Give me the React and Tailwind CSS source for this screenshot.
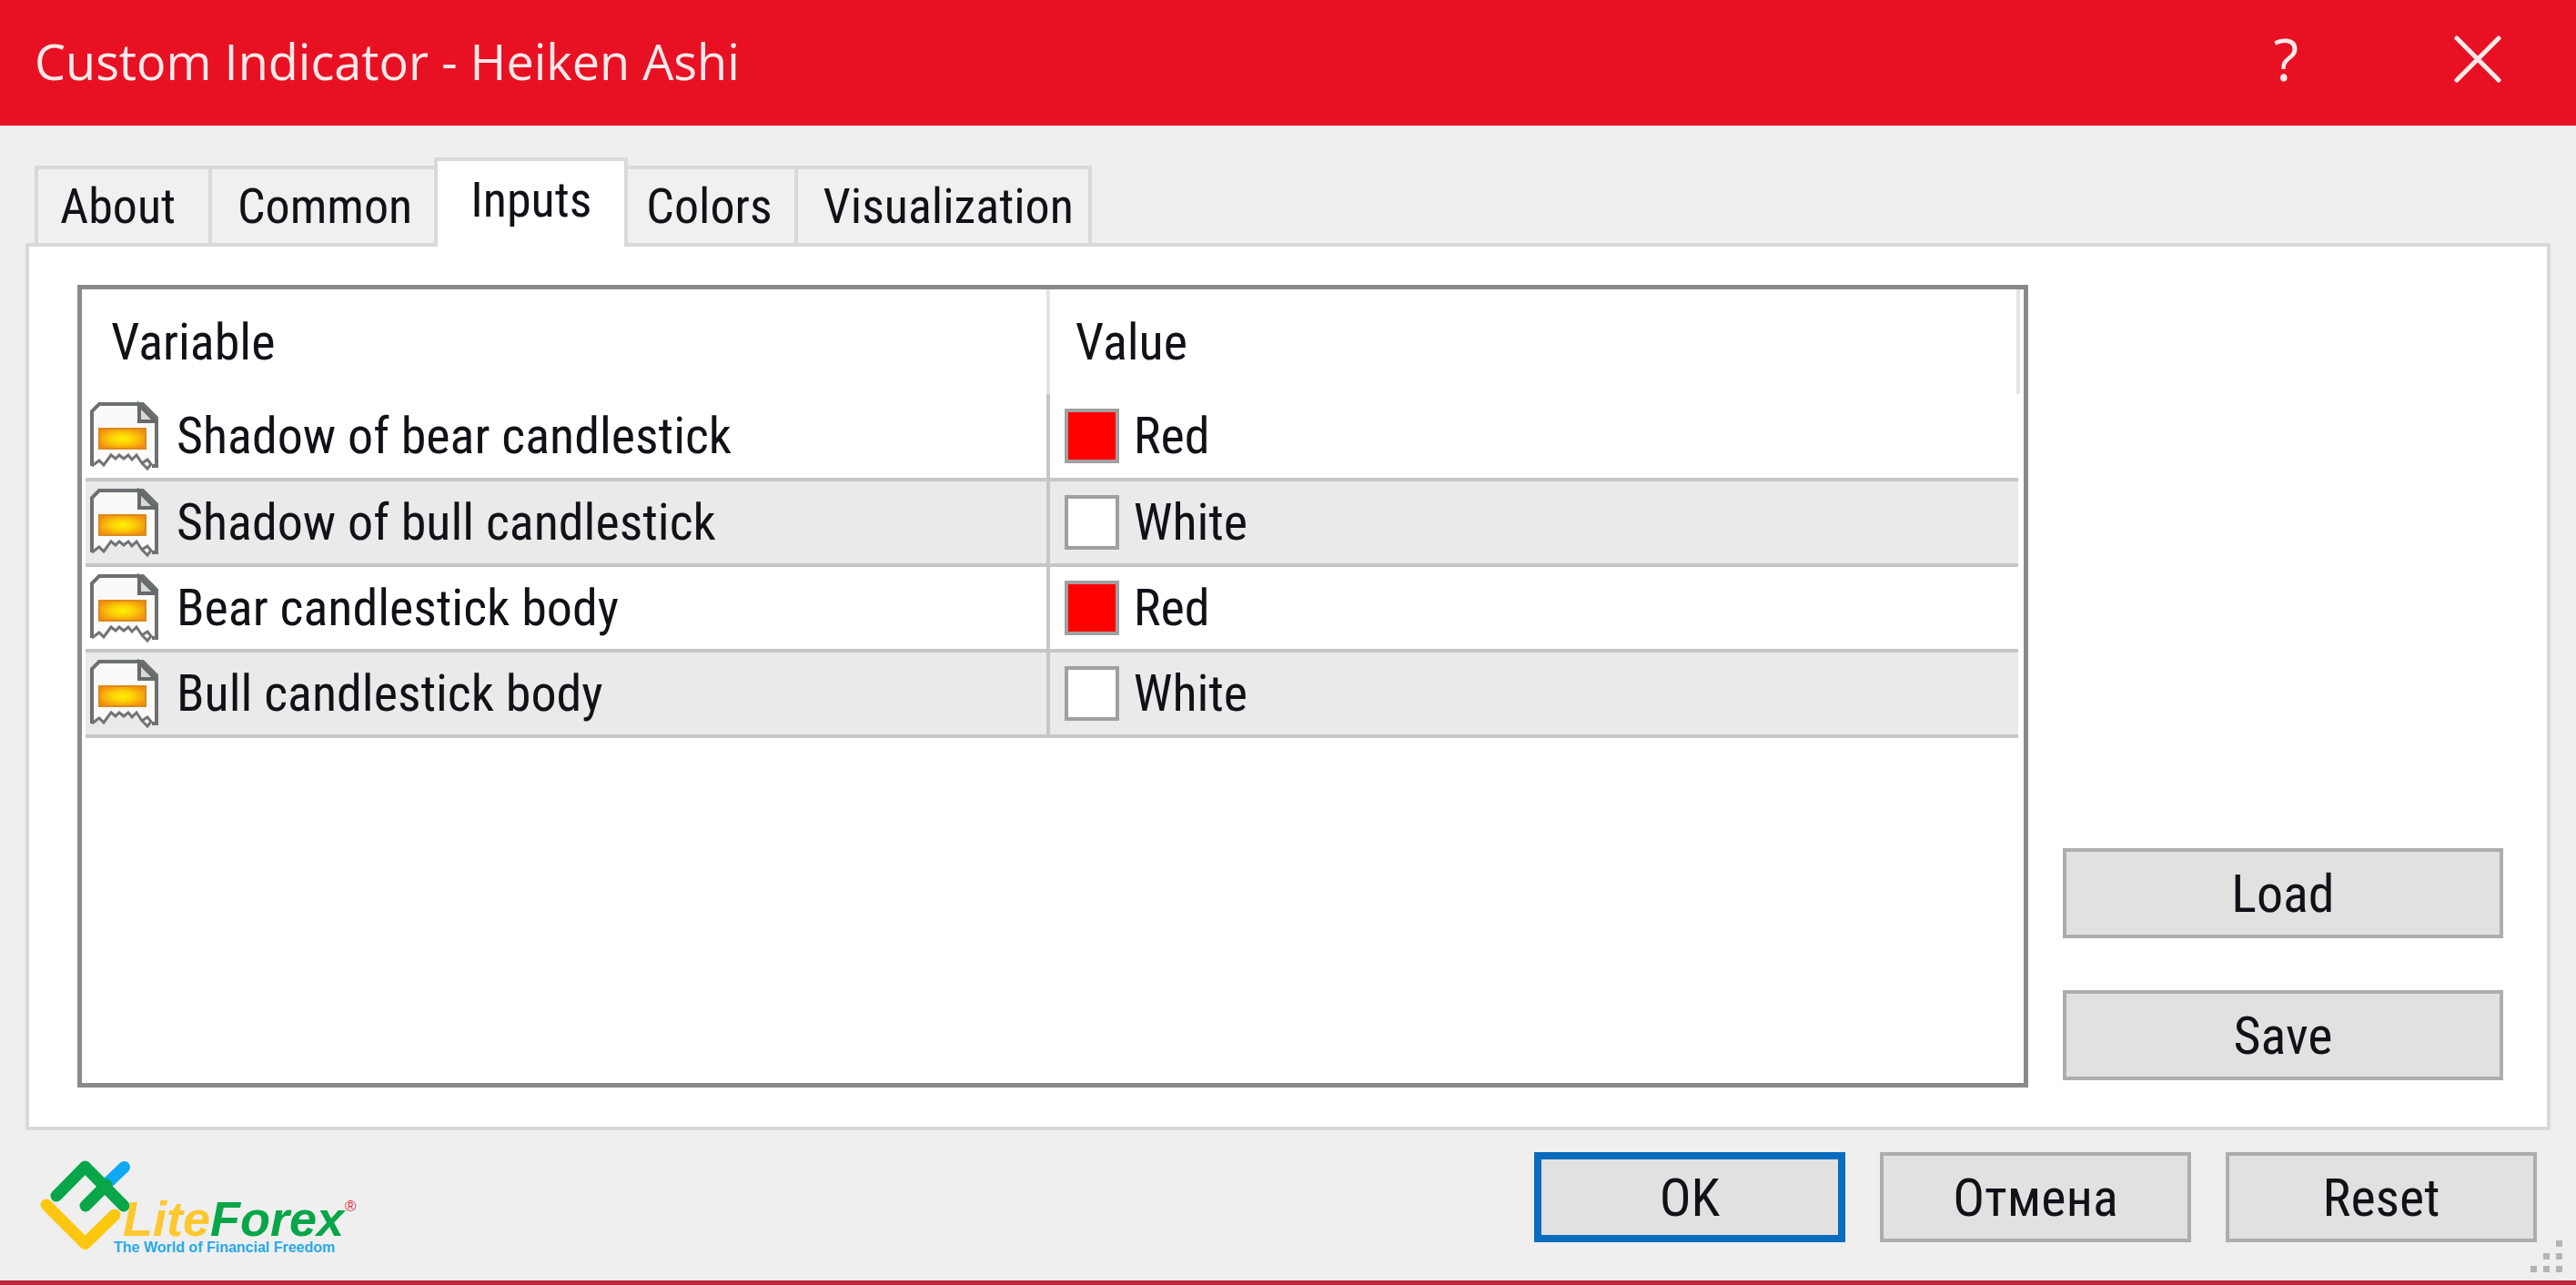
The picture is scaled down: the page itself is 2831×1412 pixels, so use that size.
import { useState } from 'react';

const TABS = ['About', 'Common', 'Inputs', 'Colors', 'Visualization'];

const INPUTS = [
  { name: 'Shadow of bear candlestick', value: 'Red' },
  { name: 'Shadow of bull candlestick', value: 'White' },
  { name: 'Bear candlestick body', value: 'Red' },
  { name: 'Bull candlestick body', value: 'White' },
];

const TAB_PADDING = {
  About: 'pl-6 pr-9',
  Common: 'pl-7 pr-6',
  Inputs: 'px-9',
  Colors: 'pl-5 pr-6',
  Visualization: 'pl-7 pr-4',
};

// Torn page with a gradient bar
function ParamIcon() {
  return (
    <svg viewBox="0 0 76 76" className="size-[76px] shrink-0" fill="none" aria-hidden="true">
      <defs>
        <radialGradient id="bar" cx="0.5" cy="0.5" r="0.6">
          <stop offset="0" stopColor="#fff200" />
          <stop offset="0.4" stopColor="#fdd008" />
          <stop offset="1" stopColor="#f08a10" />
        </radialGradient>
      </defs>
      <path
        d="M2 71V10L10 3H59L74 18V71H70L63 75L55 65L48 59L43 64L38 59L33 64L29 59L24 63L16 71L10 65L6 71Z"
        fill="#fbfaf8"
      />
      <path d="M3 71V11L11 3H59L74 18V71H69" stroke="#6c7072" strokeWidth="4" />
      <path d="M55 4V22H73Z" fill="#d8d8d4" stroke="#666a6c" strokeWidth="4" />
      <path
        d="M3 71L11 65L16 70L24 59L29 63L33 59L38 63L43 59L47 64L52 59L58 68L64 64L68 69L64 74L59 69"
        stroke="#707476"
        strokeWidth="3"
      />
      <rect x="11" y="30" width="51" height="22" fill="url(#bar)" stroke="#dc8a1c" strokeWidth="2" />
    </svg>
  );
}

function Logo() {
  return (
    <svg viewBox="0 0 360 112" className="h-[112px] w-[360px]" fill="none" role="img" aria-label="LiteForex">
      <g strokeWidth="13" strokeLinecap="round" strokeLinejoin="round">
        <path d="M11 54L53.500 96.500L86 65" stroke="#fec70f" />
        <path d="M76 32L96.500 12.500" stroke="#0fa9f5" />
        <path d="M22 44L53.500 12L96 55M54 55L77 32" stroke="#08a648" />
      </g>
      <g fontFamily="'Liberation Sans', Arial, sans-serif" fontWeight="700">
        <text x="95" y="88" fontSize="54" fontStyle="italic">
          <tspan fill="#fdc82f">Lite</tspan>
          <tspan fill="#08a648">Forex</tspan>
        </text>
        <text x="85" y="106" fontSize="16" fill="#27a9ea">The World of Financial Freedom</text>
      </g>
      <text x="339" y="61" fontSize="17" fill="#e0303a" fontFamily="'Liberation Sans', Arial, sans-serif">®</text>
    </svg>
  );
}

function DialogButton({ children, primary }) {
  return (
    <button
      type="button"
      className={`h-[99px] min-w-[342px] bg-[#e1e1e1] text-[58px] ${
        primary ? 'border-8 border-[#0a6cbd]' : 'border-4 border-[#adadad]'
      }`}
    >
      {children}
    </button>
  );
}

export default function App() {
  const [tab, setTab] = useState('Inputs');

  return (
    <div className="relative flex min-h-screen flex-col border-b-[5px] border-[#bb2a3d] bg-[#efefef] font-['Roboto_Condensed','Liberation_Sans',Arial,sans-serif] text-[54px] leading-[64px] text-[#111118]">
      {/* Title bar */}
      <header className="flex h-[138px] items-center bg-[#e81123] pr-[82px] pl-[38px] text-[#ffe9e9]">
        <h1 className="flex-1 pb-1 font-['Open_Sans','Noto_Sans',sans-serif]">
          Custom Indicator - Heiken Ashi
        </h1>
        <div className="flex items-center gap-[171px] pb-2">
          <button type="button" aria-label="Help" className="font-['Open_Sans','Noto_Sans',sans-serif] text-[64px]">
            ?
          </button>
          <button type="button" aria-label="Close">
            <svg viewBox="0 0 52 52" className="size-[52px]" stroke="currentColor" strokeWidth="5" strokeLinecap="round">
              <path d="M3 3L49 49M49 3L3 49" />
            </svg>
          </button>
        </div>
      </header>

      {/* Tabs */}
      <div role="tablist" className="-mb-1 flex items-end pt-[35px] pl-[38px]">
        {TABS.map((name) => (
          <button
            key={name}
            type="button"
            role="tab"
            aria-selected={tab === name}
            onClick={() => setTab(name)}
            className={`border-[#d9d9d9] ${TAB_PADDING[name]} ${
              tab === name
                ? 'relative -ml-1 h-[98px] border-x-4 border-t-4 bg-white pb-2'
                : 'h-[89px] border-y-4 border-r-4 bg-[#f0f0f0] first:border-l-4'
            }`}
          >
            {name}
          </button>
        ))}
      </div>

      {/* Tab page */}
      <main className="mr-[28px] ml-[28px] flex flex-1 gap-[38px] border-4 border-[#d9d9d9] bg-white pt-[42px] pr-[48px] pb-[43px] pl-[53px]">
        <div className="flex-1 border-[5px] border-[#8a8a8a] px-1">
          <table className="w-full border-collapse text-left text-[56px]">
            <thead>
              <tr className="h-[115px]">
                <th className="w-[49.8%] border-r-4 border-[#e4e4e4] pl-7 font-normal">Variable</th>
                <th className="border-r-4 border-[#e4e4e4] pl-7 font-normal">Value</th>
              </tr>
            </thead>
            <tbody>
              {INPUTS.map((input) => (
                <tr key={input.name} className="h-[94px] border-b-4 border-[#c6c6c6] even:bg-[#eaeaea]">
                  <td className="border-r-4 border-[#c6c6c6] pl-1">
                    <div className="flex items-center gap-5">
                      <ParamIcon />
                      {input.name}
                    </div>
                  </td>
                  <td className="pl-4">
                    <div className="flex items-center gap-4">
                      <span
                        className={`size-[60px] border-4 border-[#a0a0a0] ${
                          input.value === 'Red' ? 'bg-[#ff0000]' : 'bg-white'
                        }`}
                      />
                      {input.value}
                    </div>
                  </td>
                </tr>
              ))}
            </tbody>
          </table>
        </div>

        <div className="flex w-[484px] flex-col justify-end gap-[57px] pb-2">
          <DialogButton>Load</DialogButton>
          <DialogButton>Save</DialogButton>
        </div>
      </main>

      {/* Footer */}
      <footer className="flex items-start justify-between pt-6 pr-[43px] pb-[42px] pl-10">
        <div className="h-[99px] pt-1">
          <Logo />
        </div>
        <div className="flex gap-[38px]">
          <DialogButton primary>OK</DialogButton>
          <DialogButton>Отмена</DialogButton>
          <DialogButton>Reset</DialogButton>
        </div>
      </footer>

      {/* Resize grip */}
      <svg viewBox="0 0 36 36" className="absolute right-[14px] bottom-2 size-9" fill="#b4b4b4" aria-hidden="true">
        <path d="M28 0h7v7h-7zM14 14h7v7h-7zM28 14h7v7h-7zM0 28h7v7h-7zM14 28h7v7h-7zM28 28h7v7h-7z" />
      </svg>
    </div>
  );
}
